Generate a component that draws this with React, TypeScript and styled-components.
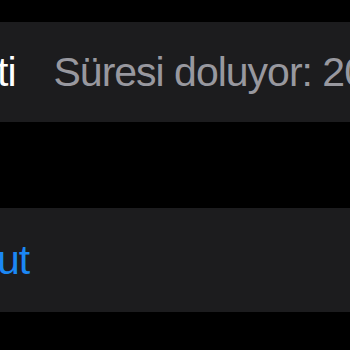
import React from "react";
import styled, { createGlobalStyle } from "styled-components";

const Global = createGlobalStyle`
  html, body {
    margin: 0;
    padding: 0;
    background: #000;
  }
  body {
    width: 350px;
    height: 350px;
    overflow: hidden;
    font-family: "Liberation Sans", Arial, sans-serif;
  }
`;

const Page = styled.div`
  display: flex;
  flex-direction: column;
  gap: 86px;
  padding-top: 22px;
  width: 350px;
  height: 350px;
  box-sizing: border-box;
  background: #000;
  overflow: hidden;
`;

const Card = styled.div<{ $h: number }>`
  display: flex;
  align-items: center;
  height: ${(p) => p.$h}px;
  background: #1c1c1e;
  overflow: hidden;
  white-space: nowrap;
`;

const Text = styled.span<{ $color: string; $offset?: number }>`
  font-size: 41px;
  line-height: 1;
  letter-spacing: -1px;
  color: ${(p) => p.$color};
  margin-left: ${(p) => p.$offset ?? 0}px;
  flex: none;
`;

export default function App() {
  return (
    <>
      <Global />
      <Page>
        <Card $h={100}>
          <Text $color="#ffffff" $offset={-3}>ti</Text>
          <Text $color="#98989f" $offset={38}>Süresi doluyor: 20</Text>
        </Card>
        <Card $h={104}>
          <Text $color="#1b87f4" $offset={-3}>ut</Text>
        </Card>
      </Page>
    </>
  );
}
